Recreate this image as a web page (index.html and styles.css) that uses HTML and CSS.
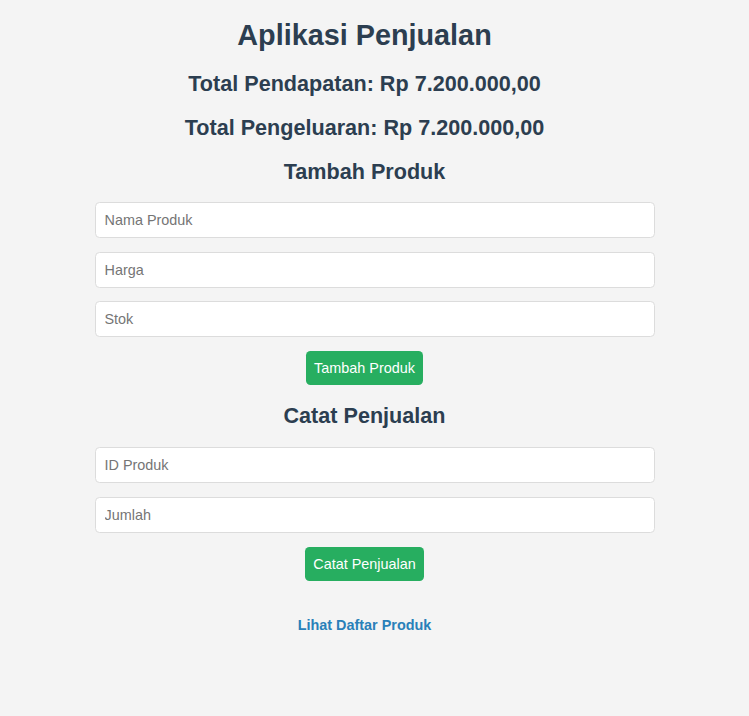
FILE: index.html
```html
<!DOCTYPE html>
<html lang="id">
<head>
<meta charset="utf-8">
<title>Aplikasi Penjualan</title>
<link rel="stylesheet" href="styles.css">
</head>
<body>
<div class="container">
  <h1>Aplikasi Penjualan</h1>
  <h2>Total Pendapatan: Rp 7.200.000,00</h2>
  <h2>Total Pengeluaran: Rp 7.200.000,00</h2>

  <h2>Tambah Produk</h2>
  <form class="form">
    <input type="text" placeholder="Nama Produk">
    <input type="number" placeholder="Harga">
    <input type="number" placeholder="Stok">
    <button type="button">Tambah Produk</button>
  </form>

  <h2>Catat Penjualan</h2>
  <form class="form">
    <input type="number" placeholder="ID Produk">
    <input type="number" placeholder="Jumlah">
    <button type="button">Catat Penjualan</button>
  </form>

  <a class="link" href="#">Lihat Daftar Produk</a>
</div>
</body>
</html>
```

FILE: styles.css
```css
html, body {
  margin: 0;
  padding: 0;
  background: #f4f4f4;
}

body {
  font-family: "Liberation Sans", Arial, sans-serif;
  color: #2c3e50;
}

.container {
  width: 540px;
  padding-right: 20px;
  margin: 0 auto;
  text-align: center;
}

h1 {
  font-size: 28.8px;
  font-weight: bold;
  margin: 18.5px 0 19.3px;
}

h2 {
  font-size: 21.6px;
  font-weight: bold;
  margin: 17.9px 0;
}

.form {
  display: flex;
  flex-direction: column;
  align-items: center;
  gap: 13.5px;
  margin: 0;
  padding: 0;
}

.form input {
  box-sizing: border-box;
  align-self: flex-start;
  width: 560px;
  height: 36px;
  padding: 0 9px;
  border: 1px solid #dcdcdc;
  border-radius: 4.5px;
  background: #fff;
  font-family: "Liberation Sans", Arial, sans-serif;
  font-size: 14.4px;
  color: #333;
  outline: none;
  -moz-appearance: textfield;
}

.form input::-webkit-outer-spin-button,
.form input::-webkit-inner-spin-button {
  -webkit-appearance: none;
  margin: 0;
}

.form input::placeholder {
  color: #757575;
}

.form button {
  box-sizing: border-box;
  height: 34px;
  padding: 0 8.5px;
  margin-top: 0.5px;
  border: none;
  border-radius: 4.5px;
  background: #27ae60;
  color: #fff;
  font-family: "Liberation Sans", Arial, sans-serif;
  font-size: 14.4px;
  cursor: pointer;
}

.link {
  display: block;
  margin-top: 36px;
  color: #2980b9;
  font-size: 14.4px;
  font-weight: bold;
  text-decoration: none;
}
```
